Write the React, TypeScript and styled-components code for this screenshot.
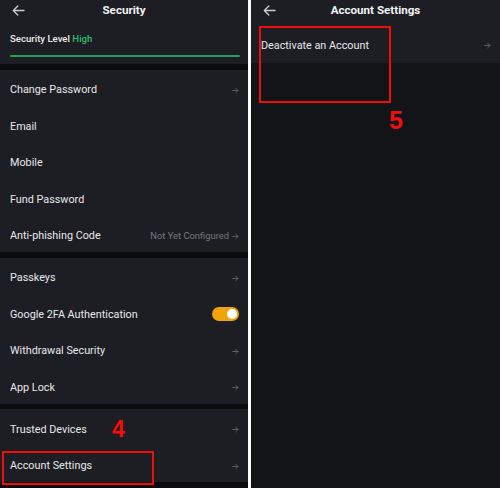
import React from "react";
import styled, { createGlobalStyle } from "styled-components";

const Global = createGlobalStyle`
  html, body { margin: 0; padding: 0; background: #ffffff; }
  body { font-family: Roboto, "Noto Sans", "Liberation Sans", sans-serif; }
  * { box-sizing: border-box; }
`;

const Screen = styled.div`
  display: grid;
  grid-template-columns: 248px 249px;
  column-gap: 3px;
  width: 500px;
  height: 488px;
  background: #ffffff;
  overflow: hidden;
`;

const Panel = styled.div<{ $bg: string }>`
  position: relative;
  display: flex;
  flex-direction: column;
  height: 488px;
  background: ${(p) => p.$bg};
  overflow: hidden;
`;

const Header = styled.div`
  display: grid;
  grid-template-columns: 30px 1fr 30px;
  align-items: center;
  height: 20px;
  background: #1d1e23;
`;

const BackBtn = styled.div`
  display: flex;
  align-items: center;
  justify-content: center;
  padding-left: 6px;
`;

const Title = styled.div`
  text-align: center;
  color: #f2f2f2;
  font-size: 11.6px;
  font-weight: 700;
  line-height: 20px;
`;

const LevelBox = styled.div`
  display: flex;
  flex-direction: column;
  gap: 9px;
  padding: 12px 8px 0 10px;
  height: 46px;
  background: #1d1e23;
`;

const LevelText = styled.div`
  color: #ececec;
  font-size: 9.6px;
  font-weight: 500;
  line-height: 14px;
`;

const Green = styled.span`
  color: #2ebd6e;
`;

const LevelBar = styled.div`
  height: 2px;
  background: #27a25c;
  border-radius: 1px;
`;

const Gap = styled.div<{ $h: number }>`
  height: ${(p) => p.$h}px;
  background: #0c0c0e;
  flex-shrink: 0;
`;

const Section = styled.div`
  display: flex;
  flex-direction: column;
  background: #1d1e23;
`;

const Row = styled.div<{ $h?: number; $top?: number }>`
  display: flex;
  align-items: center;
  justify-content: space-between;
  height: ${(p) => p.$h ?? 36.5}px;
  padding: ${(p) => p.$top ?? 5}px 9px 0 10px;
  flex-shrink: 0;
`;

const Label = styled.span`
  color: #e8e8ea;
  font-size: 10.8px;
  line-height: 14px;
`;

const Trail = styled.div`
  display: flex;
  align-items: center;
  gap: 3px;
`;

const Note = styled.span`
  color: #75767c;
  font-size: 9.4px;
  line-height: 12px;
`;

const Toggle = styled.div`
  position: relative;
  width: 27px;
  height: 14px;
  border-radius: 7px;
  background: #f0a30a;
  margin-top: -2px;
`;

const Knob = styled.div`
  position: absolute;
  right: 2px;
  top: 2px;
  width: 10px;
  height: 10px;
  border-radius: 50%;
  background: #ffffff;
`;

const Tall = styled.div`
  flex: 1;
  background: #131418;
`;

const Callout = styled.div<{ $l: number; $t: number; $w: number; $h: number }>`
  position: absolute;
  left: ${(p) => p.$l}px;
  top: ${(p) => p.$t}px;
  width: ${(p) => p.$w}px;
  height: ${(p) => p.$h}px;
  border: 2.5px solid #f20d0d;
`;

const Step = styled.div<{ $l: number; $t: number; $s: number }>`
  position: absolute;
  left: ${(p) => p.$l}px;
  top: ${(p) => p.$t}px;
  color: #f20d0d;
  font-family: "Liberation Sans", Arial, sans-serif;
  font-size: ${(p) => p.$s}px;
  font-weight: 700;
  line-height: 1;
`;

const Back = () => (
  <svg width="13" height="11" viewBox="0 0 13 11" fill="none">
    <path d="M12 5.5H1.5M5.8 1L1.3 5.5L5.8 10" stroke="#c9cacd" strokeWidth="1.4" strokeLinecap="round" strokeLinejoin="round" />
  </svg>
);

const Arrow = () => (
  <svg width="7" height="7" viewBox="0 0 7 7" fill="none">
    <path d="M0.6 3.5H6M3.7 1.2L6 3.5L3.7 5.8" stroke="#5d5e64" strokeWidth="1" strokeLinecap="round" strokeLinejoin="round" />
  </svg>
);

type Item = { label: string; note?: string; toggle?: boolean; plain?: boolean };

const groups: Item[][] = [
  [
    { label: "Change Password" },
    { label: "Email", plain: true },
    { label: "Mobile", plain: true },
    { label: "Fund Password", plain: true },
    { label: "Anti-phishing Code", note: "Not Yet Configured" },
  ],
  [
    { label: "Passkeys" },
    { label: "Google 2FA Authentication", toggle: true },
    { label: "Withdrawal Security" },
    { label: "App Lock" },
  ],
  [{ label: "Trusted Devices" }, { label: "Account Settings" }],
];

const ItemRow = ({ item }: { item: Item }) => (
  <Row>
    <Label>{item.label}</Label>
    {item.toggle ? (
      <Toggle>
        <Knob />
      </Toggle>
    ) : item.plain ? null : (
      <Trail>
        {item.note && <Note>{item.note}</Note>}
        <Arrow />
      </Trail>
    )}
  </Row>
);

export default function App() {
  return (
    <>
      <Global />
      <Screen>
        <Panel $bg="#0c0c0e">
          <Header>
            <BackBtn>
              <Back />
            </BackBtn>
            <Title>Security</Title>
            <span />
          </Header>
          <LevelBox>
            <LevelText>
              Security Level <Green>High</Green>
            </LevelText>
            <LevelBar />
          </LevelBox>
          {groups.map((g, i) => (
            <React.Fragment key={i}>
              <Gap $h={i === 0 ? 6 : 5.5} />
              <Section>
                {g.map((item) => (
                  <ItemRow key={item.label} item={item} />
                ))}
              </Section>
            </React.Fragment>
          ))}
          <Gap $h={6} />
          <Step $l={112} $t={418} $s={23}>4</Step>
          <Callout $l={2} $t={451} $w={152} $h={34} />
        </Panel>
        <Panel $bg="#131418">
          <Header>
            <BackBtn>
              <Back />
            </BackBtn>
            <Title>Account Settings</Title>
            <span />
          </Header>
          <Section>
            <Row $h={43} $top={8}>
              <Label>Deactivate an Account</Label>
              <Arrow />
            </Row>
          </Section>
          <Tall />
          <Step $l={138} $t={108} $s={25}>5</Step>
          <Callout $l={8} $t={26} $w={132} $h={77} />
        </Panel>
      </Screen>
    </>
  );
}
